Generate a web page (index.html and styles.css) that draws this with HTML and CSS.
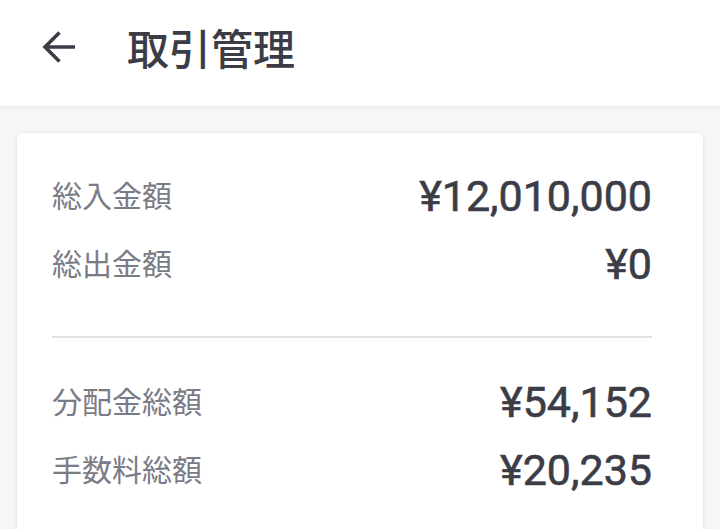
FILE: index.html
```html
<!DOCTYPE html>
<html lang="ja">
<head>
<meta charset="utf-8">
<link rel="stylesheet" href="styles.css">
</head>
<body>
<header class="appbar">
  <svg class="back" width="36" height="34" viewBox="0 0 36 34" aria-hidden="true">
    <path d="M34 17H4 M18.5 2.5 L4 17 L18.5 31.5" fill="none" stroke="#3c3c46" stroke-width="3.6" stroke-linejoin="miter"/>
  </svg>
  <h1 class="title">取引管理</h1>
</header>
<main class="card">
  <section class="group">
    <div class="row"><span class="label">総入金額</span><span class="amount">¥12,010,000</span></div>
    <div class="row"><span class="label">総出金額</span><span class="amount">¥0</span></div>
  </section>
  <hr class="divider">
  <section class="group">
    <div class="row"><span class="label">分配金総額</span><span class="amount">¥54,152</span></div>
    <div class="row"><span class="label">手数料総額</span><span class="amount">¥20,235</span></div>
  </section>
</main>
</body>
</html>
```
FILE: styles.css
```css
html, body {
  margin: 0;
  padding: 0;
}
body {
  background: #f6f6f7;
  font-family: Roboto, "Noto Sans CJK JP", sans-serif;
  color: #3c3c46;
  height: 529px;
  overflow: hidden;
}
.appbar {
  height: 106px;
  box-sizing: border-box;
  background: #ffffff;
  display: flex;
  align-items: center;
  padding: 0 0 12px 41px;
  box-shadow: 0 1px 4px rgba(0, 0, 0, 0.08);
  position: relative;
  z-index: 1;
}
.back {
  flex: none;
  display: block;
}
.title {
  margin: 0 0 0 50px;
  font-family: "Noto Sans CJK JP", sans-serif;
  font-size: 42px;
  font-weight: 500;
  line-height: 1;
  color: #3c3c46;
}
.card {
  margin: 27px 17px 0 17px;
  background: #ffffff;
  border-radius: 6px;
  box-shadow: 0 1px 4px rgba(0, 0, 0, 0.12);
  padding: 29px 51px 40px 35px;
}
.row {
  height: 68px;
  display: flex;
  align-items: center;
  justify-content: space-between;
}
.label {
  font-family: "Noto Sans CJK JP", sans-serif;
  font-size: 30px;
  font-weight: 400;
  color: #7b7b86;
  position: relative;
  top: -2px;
}
.amount {
  font-family: Roboto, sans-serif;
  font-size: 43px;
  font-weight: 400;
  color: #3c3c46;
  -webkit-text-stroke: 0.6px #3c3c46;
}
.divider {
  border: none;
  height: 2px;
  background: #e1e1e5;
  margin: 38px 0 30px 0;
}
```
